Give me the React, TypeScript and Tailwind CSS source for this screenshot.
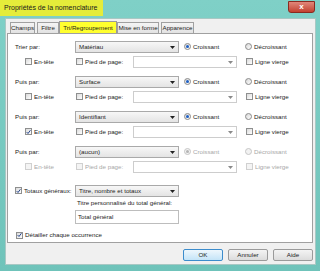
import React from 'react'

// petits contrôles façon Windows 7
const Arrow = ({ muted }: { muted?: boolean }) => (
  <svg width="5" height="3" viewBox="0 0 5 3">
    <path d="M0 0h5L2.5 3z" fill={muted ? '#8a8a8a' : '#222'} />
  </svg>
)

const Select = ({ value, width, muted }: { value: string; width: string; muted?: boolean }) => (
  <div
    className={`flex h-[12px] ${width} items-center justify-between border pl-[3px] pr-[3px] ${
      muted ? 'border-[#cdcdcd] bg-white' : 'border-[#a9a9a9] bg-gradient-to-b from-[#f7f7f7] to-[#e4e4e4]'
    }`}
  >
    <span className="leading-none">{value}</span>
    <Arrow muted={muted} />
  </div>
)

const Check = ({ checked, disabled }: { checked?: boolean; disabled?: boolean }) => (
  <span
    className={`flex h-[7px] w-[7px] shrink-0 items-center justify-center border ${
      disabled ? 'border-[#d0d0d0] bg-[#f4f4f4]' : 'border-[#8e8f8f] bg-gradient-to-br from-[#dadada] to-white'
    }`}
  >
    {checked && (
      <svg width="6" height="6" viewBox="0 0 6 6">
        <path d="M0.8 3.1l1.6 1.7L5.3 0.9" stroke={disabled ? '#aaa' : '#26458c'} strokeWidth="1.2" fill="none" />
      </svg>
    )}
  </span>
)

const Radio = ({ checked, disabled }: { checked?: boolean; disabled?: boolean }) => (
  <span
    className={`flex h-[7px] w-[7px] shrink-0 items-center justify-center rounded-full border ${
      disabled ? 'border-[#c6c6c6] bg-[#f2f2f2]' : 'border-[#8a8a8a] bg-gradient-to-br from-[#d6d6d6] to-white'
    }`}
  >
    {checked && <span className={`h-[3px] w-[3px] rounded-full ${disabled ? 'bg-[#b4b4b4]' : 'bg-[#1d5fc4]'}`} />}
  </span>
)

interface SortGroupProps {
  label: string
  value: string
  header?: boolean
  disabled?: boolean
}

const SortGroup = ({ label, value, header, disabled }: SortGroupProps) => (
  <div className="flex flex-col gap-[3px]">
    <div className="flex h-[12px] items-center">
      <span className="w-[60px]">{label}</span>
      <Select value={value} width="w-[104px]" />
      <label className={`ml-[5px] flex w-[61px] items-center gap-[2px] ${disabled ? 'text-[#a8a8a8]' : ''}`}>
        <Radio checked disabled={disabled} />
        Croissant
      </label>
      <label className={`flex items-center gap-[2px] ${disabled ? 'text-[#a8a8a8]' : ''}`}>
        <Radio disabled={disabled} />
        Décroissant
      </label>
    </div>
    <div className={`flex h-[12px] items-center ${disabled ? 'text-[#a8a8a8]' : ''}`}>
      <label className="ml-[10px] flex w-[51px] items-center gap-[2px]">
        <Check checked={header} disabled={disabled} />
        En-tête
      </label>
      <label className="flex w-[57px] items-center gap-[2px]">
        <Check disabled={disabled} />
        Pied de page:
      </label>
      <Select value="" width="w-[104px]" muted />
      <label className="ml-[9px] flex items-center gap-[2px]">
        <Check disabled={disabled} />
        Ligne vierge
      </label>
    </div>
  </div>
)

const tabs = [
  { name: 'Champs', cls: 'ml-[4px] mr-[2px] w-[25px]' },
  { name: 'Filtre', cls: 'w-[22px]' },
  { name: 'Tri/Regroupement', cls: 'w-[58px] h-[12px] bg-[#ffff2e] border-[#9a9a9a]', active: true },
  { name: 'Mise en forme', cls: 'mr-[2px] w-[42px]' },
  { name: 'Apparence', cls: 'w-[33px]' },
]

const Button = ({ children, primary }: { children: React.ReactNode; primary?: boolean }) => (
  <div
    className={`flex h-[12px] w-[40px] items-center justify-center rounded-[2px] border ${
      primary ? 'border-[#3c8ccc] bg-gradient-to-b from-[#eef7fd] to-[#c4e4f8]' : 'border-[#9a9a9a] bg-gradient-to-b from-[#f4f4f4] to-[#dcdcdc]'
    }`}
  >
    {children}
  </div>
)

export default function App() {
  return (
    <div className="flex h-[271px] w-[320px] flex-col overflow-hidden bg-gradient-to-b from-[#7fd0c7] to-[#6fc3ba] font-['Liberation_Sans',Arial,sans-serif] text-[6.2px] text-[#1c1c1c]">
      {/* barre de titre */}
      <div className="flex h-[18px] shrink-0 items-start">
        <div className="flex h-[16px] w-[103px] items-center bg-[#e5ec3a] pl-[4px] text-[7px] text-[#1a1a1a]">
          Propriétés de la nomenclature
        </div>
        <div className="ml-auto mr-[5px] mt-[1px] flex h-[12px] w-[27px] items-center justify-center rounded-b-[3px] border border-[#8a2a20] bg-gradient-to-b from-[#e0877a] to-[#c2402f] text-[8px] font-bold leading-none text-white">
          x
        </div>
      </div>

      {/* zone client */}
      <div className="ml-[5px] mr-[4px] flex h-[247px] shrink-0 flex-col border border-[#a8c8c4] bg-[#f0f0f0]">
        <div className="mt-[2px] flex h-[12px] items-end">
          {tabs.map((t) => (
            <div
              key={t.name}
              className={`flex h-[11px] items-center justify-center border border-b-0 ${
                t.active ? '' : 'border-[#a0a0a0] bg-gradient-to-b from-[#f4f4f4] to-[#e2e2e2]'
              } ${t.cls}`}
            >
              {t.name}
            </div>
          ))}
        </div>

        <div className="ml-[1px] mr-[2px] flex h-[210px] flex-col border border-[#a0a0a0] bg-white pl-[7px] pt-[7px]">
          <div className="flex flex-col gap-[8px]">
            <SortGroup label="Trier par:" value="Matériau" />
            <SortGroup label="Puis par:" value="Surface" />
            <SortGroup label="Puis par:" value="Identifiant" header />
            <SortGroup label="Puis par:" value="(aucun)" disabled />
          </div>

          <div className="mt-[12px] flex h-[12px] items-center">
            <label className="flex w-[60px] items-center gap-[2px]">
              <Check checked />
              Totaux généraux:
            </label>
            <Select value="Titre, nombre et totaux" width="w-[104px]" />
          </div>
          <div className="ml-[62px] mt-[2px] flex h-[8px] items-center">Titre personnalisé du total général:</div>
          <div className="ml-[60px] mt-[3px] flex h-[14px] w-[104px] items-center border border-[#bdbdbd] bg-white pl-[2px]">
            Total général
          </div>
          <label className="ml-[1px] mt-[7px] flex h-[8px] items-center gap-[2px]">
            <Check checked />
            Détailler chaque occurrence
          </label>
        </div>

        <div className="mt-[6px] flex justify-end gap-[5px] pr-[2px]">
          <Button primary>OK</Button>
          <Button>Annuler</Button>
          <Button>Aide</Button>
        </div>
      </div>
    </div>
  )
}
